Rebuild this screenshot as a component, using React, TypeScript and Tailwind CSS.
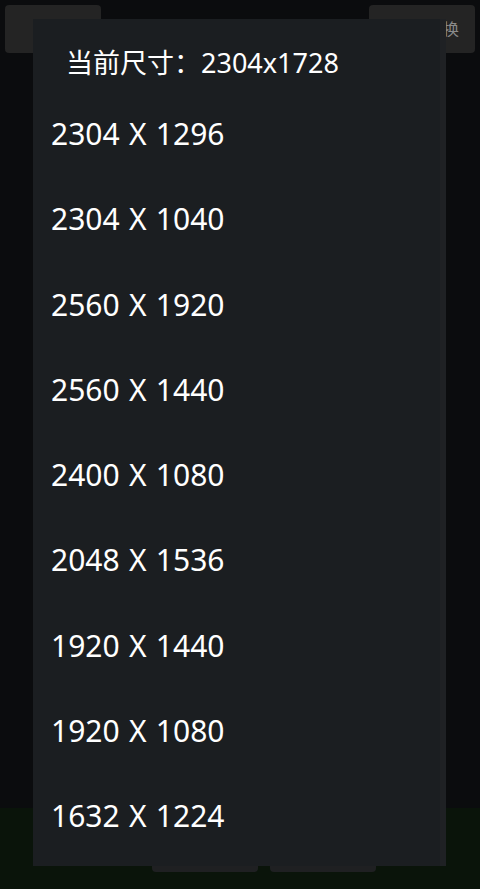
const sizes = [
  '2304 X 1296',
  '2304 X 1040',
  '2560 X 1920',
  '2560 X 1440',
  '2400 X 1080',
  '2048 X 1536',
  '1920 X 1440',
  '1920 X 1080',
  '1632 X 1224',
];

const font = { fontFamily: '"Noto Sans", "Noto Sans CJK SC", sans-serif' };

export default function App() {
  return (
    <div className="relative w-[480px] h-[889px] overflow-hidden bg-[#0b0c0e]" style={font}>
      {/* camera screen behind the dialog */}
      <div className="flex flex-col h-full">
        <div className="flex justify-between px-[5px] pt-[5px]">
          <div className="w-[96px] h-[48px] rounded-[4px] bg-[#242424]" />
          <div className="w-[106px] h-[48px] rounded-[4px] bg-[#242424] flex items-center justify-end pr-[16px] text-[16px] text-[#8a8a8a]">
            切换
          </div>
        </div>
        <div className="flex-1" />
        <div className="h-[81px] bg-[#0a140a] flex justify-center gap-[12px] pl-[48px]">
          <div className="w-[106px] h-[64px] rounded-[4px] bg-[#1f2022]" />
          <div className="w-[106px] h-[64px] rounded-[4px] bg-[#1f2022]" />
        </div>
      </div>

      {/* size picker dialog */}
      <div className="absolute left-[33px] top-[19px] w-[413px] h-[847px] bg-[#1b1e21] flex">
        <div className="flex-1 flex flex-col">
          <div className="pt-[27px] pb-[12px] pl-[33px] text-[27px] leading-[33px] text-white">
            当前尺寸：2304x1728
          </div>
          {sizes.map((s) => (
            <div key={s} className="h-[85.25px] flex items-center pl-[18px] text-[30px] text-white [word-spacing:1.5px]">
              {s}
            </div>
          ))}
        </div>
        <div className="w-[6px] bg-[#1f2124]" />
      </div>
    </div>
  );
}
